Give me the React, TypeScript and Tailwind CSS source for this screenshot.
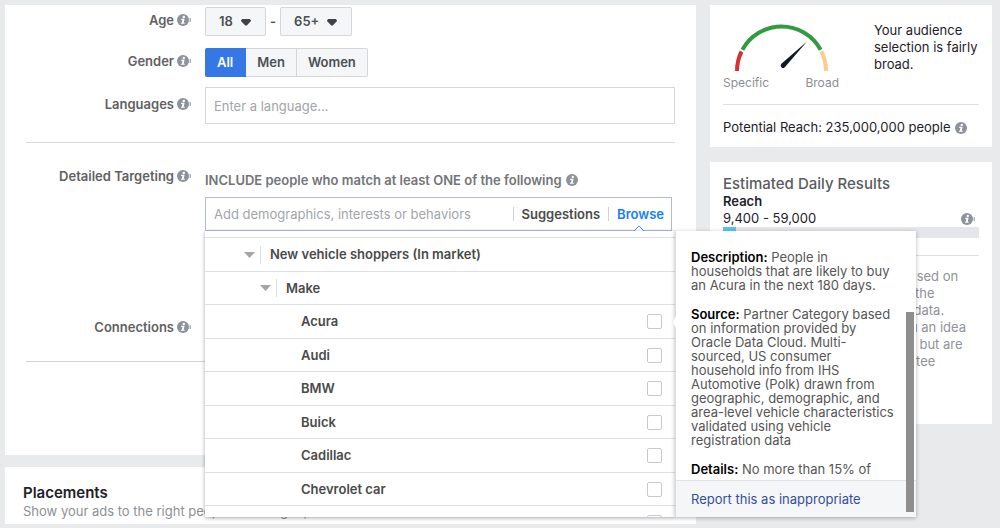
import { useState } from "react";
import clsx from "clsx";

type Node = { label: string; depth: 0 | 1 | 2 };

const nodes: Node[] = [
  { label: "New vehicle shoppers (In market)", depth: 0 },
  { label: "Make", depth: 1 },
  { label: "Acura", depth: 2 },
  { label: "Audi", depth: 2 },
  { label: "BMW", depth: 2 },
  { label: "Buick", depth: 2 },
  { label: "Cadillac", depth: 2 },
  { label: "Chevrolet car", depth: 2 },
  { label: "Chevrolet truck", depth: 2 },
];

const genders = ["All", "Men", "Women"];

function InfoIcon({ tail = false }: { tail?: boolean }) {
  return (
    <svg
      viewBox="0 0 14 12"
      className="h-3 w-3.5 shrink-0"
      role="img"
      aria-label="More info"
    >
      <circle cx="6" cy="6" r="6" fill="#8d929b" />
      <circle cx="6.8" cy="2.9" r="1.2" fill="#fff" />
      <path d="M4.2 4.8h3.4l-.9 3.9h1v1.1H3.9V8.7h.9l.6-2.8H4.2z" fill="#fff" />
      {tail && <path d="M13.2 4v4" stroke="#8d929b" strokeWidth="1" />}
    </svg>
  );
}

function FieldLabel({ text, htmlFor }: { text: string; htmlFor?: string }) {
  return (
    <label
      htmlFor={htmlFor}
      className="flex h-5 w-[165px] shrink-0 items-center justify-end gap-[3px] font-semibold text-[#616161]"
    >
      {text}
      <InfoIcon tail />
    </label>
  );
}

function AgeSelect({
  label,
  id,
  value,
  className,
}: {
  label: string;
  id?: string;
  value: string;
  className: string;
}) {
  return (
    <div className={clsx("relative", className)}>
      <select
        id={id}
        aria-label={label}
        defaultValue={value}
        className="h-[29px] w-full appearance-none rounded-[2px] border border-[#d4d6da] bg-[#f5f6f7] pl-[13px] font-semibold text-[#4b4f56]"
      >
        <option>{value}</option>
      </select>
      <svg
        viewBox="0 0 10 7"
        className="pointer-events-none absolute top-[12px] right-[15px] h-[7px] w-2.5"
      >
        <path d="M1.2 0h7.6L10 1.4V2L5.8 6.4H4.2L0 2v-.6z" fill="#3e4248" />
      </svg>
    </div>
  );
}

function TreeRow({ node }: { node: Node }) {
  const id = node.label.toLowerCase().replace(/[^a-z]+/g, "-");

  return (
    <li
      className={clsx(
        "flex shrink-0 items-center border-t border-[#dfe0e3] pr-[13px] odd:h-[34px] even:h-[33px]",
        node.depth === 0 && "pl-[39px]",
        node.depth === 1 && "pl-[55px]",
        node.depth === 2 && "pl-24",
      )}
    >
      {node.depth < 2 ? (
        <button
          type="button"
          aria-expanded="true"
          className="flex items-center font-semibold text-[#4a4a4a]"
        >
          <svg viewBox="0 0 11 6" className="h-1.5 w-[11px]">
            <path d="M0 0h11L5.5 6z" fill="#a3a5a8" />
          </svg>
          <span className="mr-[9px] ml-[5px] h-[18px] border-l border-[#dfe0e3]" />
          {node.label}
        </button>
      ) : (
        <>
          <label htmlFor={id} className="flex-1 font-semibold text-[#4a4a4a]">
            {node.label}
          </label>
          <input
            id={id}
            type="checkbox"
            className="size-[15px] appearance-none rounded-[2px] border border-[#c6c9d2] bg-white checked:bg-[#3578e5]"
          />
        </>
      )}
    </li>
  );
}

function DetailPopover() {
  return (
    <div className="absolute top-0 left-full flex h-full w-[241px] flex-col border-l border-[#dcdde1] bg-white shadow-[0_1px_4px_rgba(0,0,0,0.3)]">
      <svg
        viewBox="0 0 4 12"
        className="absolute top-[85px] -left-1 h-3 w-1"
      >
        <path d="M4 0v12L0 6z" fill="#fff" />
        <path d="M4 0L0 6l4 6" fill="none" stroke="#e4e5e8" strokeWidth="0.6" />
      </svg>
      <div className="min-h-0 flex-1 space-y-[15px] overflow-hidden pt-[19px] pl-[15px] leading-[14px] text-[#555]">
        <p>
          <b className="font-semibold text-black">Description:</b> People in
          <br />
          households that are likely to buy
          <br />
          an Acura in the next 180 days.
        </p>
        <p>
          <b className="font-semibold text-black">Source:</b> Partner Category based
          <br />
          on information provided by
          <br />
          Oracle Data Cloud. Multi-
          <br />
          sourced, US consumer
          <br />
          household info from IHS
          <br />
          Automotive (Polk) drawn from
          <br />
          geographic, demographic, and
          <br />
          area-level vehicle characteristics
          <br />
          validated using vehicle
          <br />
          registration data
        </p>
        <p>
          <b className="font-semibold text-black">Details:</b> No more than 15% of
        </p>
      </div>
      <div className="flex h-[37px] items-center border-t border-[#e2e3e6] bg-[#f5f6f8] px-[15px]">
        <a href="#report" className="text-[#33509a]">
          Report this as inappropriate
        </a>
      </div>
      {/* Scroll thumb */}
      <div className="absolute right-0.5 bottom-[5px] h-[200px] w-2 bg-[#8e8e8e]" />
    </div>
  );
}

function TargetingSearch() {
  return (
    <div className="relative">
      <div className="mr-[3px] flex h-[34px] items-center border border-[#b4bbd3] bg-white pr-[7px] pl-2">
        <input
          id="targeting"
          type="text"
          placeholder="Add demographics, interests or behaviors"
          className="h-full min-w-0 flex-1 outline-none placeholder:text-[#a3a5a9]"
        />
        <button
          type="button"
          className="border-l border-[#cfd1d5] px-2 leading-[14px] font-semibold text-[#4a4a4a]"
        >
          Suggestions
        </button>
        <button
          type="button"
          className="relative border-l border-[#cfd1d5] pl-2 leading-[14px] font-semibold text-[#147efb]"
        >
          Browse
          <svg
            viewBox="0 0 12 7"
            className="absolute top-[18px] left-6 h-[7px] w-3"
          >
            <path d="M1 7l5-5.5L11 7z" fill="#fff" />
            <path d="M.5 6.5L6 1l5.5 5.5" fill="none" stroke="#4a90e8" />
          </svg>
        </button>
      </div>

      <div className="absolute top-full left-0 z-10 h-[286px] w-full">
        <ul className="flex h-full flex-col overflow-hidden bg-white pt-1.5 shadow-[0_1px_4px_rgba(0,0,0,0.35)]">
          {nodes.map((node) => (
            <TreeRow key={node.label} node={node} />
          ))}
        </ul>
        <DetailPopover />
      </div>
    </div>
  );
}

function AudienceForm() {
  const [gender, setGender] = useState("All");

  return (
    <form className="bg-white px-[21px] pt-0.5 pb-[93px]">
      <div className="flex gap-3.5">
        <div className="pt-[3px]">
          <FieldLabel text="Age" htmlFor="age-min" />
        </div>
        <div className="flex items-center gap-1">
          <AgeSelect id="age-min" label="Minimum age" value="18" className="w-[61px]" />
          <span className="font-semibold text-[#4b4f56]">-</span>
          <AgeSelect label="Maximum age" value="65+" className="w-[72px]" />
        </div>
      </div>

      <div className="mt-3 flex gap-3.5">
        <div className="pt-[3px]">
          <FieldLabel text="Gender" />
        </div>
        <div className="flex h-[29px]" role="group" aria-label="Gender">
          {genders.map((g) => (
            <button
              key={g}
              type="button"
              aria-pressed={g === gender}
              onClick={() => setGender(g)}
              className={clsx(
                "border-y border-r px-[11px] font-semibold first:rounded-l-[2px] first:px-3 last:rounded-r-[2px]",
                g === gender
                  ? "border-[#3578e5] bg-[#3578e5] text-white"
                  : "border-[#d4d6da] bg-[#f5f6f7] text-[#4b4f56]",
              )}
            >
              {g}
            </button>
          ))}
        </div>
      </div>

      <div className="mt-2.5 flex gap-3.5">
        <div className="pt-[7px]">
          <FieldLabel text="Languages" htmlFor="languages" />
        </div>
        <input
          id="languages"
          type="text"
          placeholder="Enter a language..."
          className="h-[37px] min-w-0 flex-1 border border-[#d6d7da] px-2 placeholder:text-[#a3a5a9]"
        />
      </div>

      <hr className="mt-[18px] border-[#d9dadc]" />

      <div className="mt-[23px] flex gap-3.5">
        <FieldLabel text="Detailed Targeting" htmlFor="targeting" />
        <div className="min-w-0 flex-1 pt-1">
          <div className="mb-[7px] flex h-5 items-center gap-1 font-semibold text-[#737577]">
            INCLUDE people who match at least ONE of the following
            <InfoIcon />
          </div>
          <TargetingSearch />
        </div>
      </div>

      <div className="mt-[86px]">
        <FieldLabel text="Connections" />
      </div>

      <hr className="mt-6 border-[#d2d3d6]" />
    </form>
  );
}

function Gauge() {
  return (
    <div className="w-[116px] text-[#8d8f93]">
      <svg viewBox="0 0 116 54" className="h-[54px] w-[116px]" role="img" aria-label="Audience gauge">
        <g fill="none" strokeWidth="4">
          <path d="M14 51A44.5 44.5 0 0 1 18.5 31.5" stroke="#d7312f" />
          <path d="M19.4 29.8A44.5 44.5 0 0 1 97.6 29.8" stroke="#329a41" />
          <path d="M98.5 31.5A44.5 44.5 0 0 1 103 51" stroke="#fbcd8e" />
        </g>
        <path d="M84 21.5L61.8 47.2a2.4 2.4 0 0 1-3.4-3.4z" fill="#111827" />
      </svg>
      <div className="flex h-[18px] items-center justify-between text-xs">
        <span>Specific</span>
        <span>Broad</span>
      </div>
    </div>
  );
}

export default function App() {
  return (
    <div className="flex min-h-screen items-start gap-3.5 bg-[#e9eaec] pt-[5px] pr-2 pb-1 pl-[5px] font-[Inter,'Liberation_Sans',sans-serif] text-[13px] leading-[17px]">
      <main className="flex min-w-0 flex-1 flex-col gap-3">
        <AudienceForm />
        <section className="bg-white px-[18px] pt-[17px] pb-1">
          <h2 className="text-[15px] leading-[18px] font-semibold text-[#1d2129]">
            Placements
          </h2>
          <p className="leading-[18px] text-[#8d8f93]">
            Show your ads to the right people in the right places.
          </p>
        </section>
      </main>

      <aside className="flex w-[282px] shrink-0 flex-col gap-[15px]">
        <section className="bg-white px-[13px] pt-[15px] pb-[11px]">
          <div className="flex justify-between">
            <Gauge />
            <p className="w-[105px] pt-0.5 text-[#1d2129]">
              Your audience selection is fairly broad.
            </p>
          </div>
          <hr className="mt-3 border-[#dfe0e3]" />
          <p className="mt-3.5 flex h-[17px] items-center gap-1 text-[#1d2129]">
            Potential Reach: 235,000,000 people
            <InfoIcon />
          </p>
        </section>

        <section className="bg-white px-[13px] pt-[13px] pb-[37px]">
          <h2 className="text-[15px] leading-[18px] font-medium text-[#5a5c60]">
            Estimated Daily Results
          </h2>
          <h3 className="font-semibold text-[#1d2129]">Reach</h3>
          <div className="flex items-center justify-between pr-1 text-[#1d2129]">
            9,400 - 59,000
            <InfoIcon tail />
          </div>
          <div className="h-[11px] bg-[#e4e6ea]">
            <div className="h-full w-[5%] bg-[#54c7ec]" />
          </div>
          <hr className="mt-[17px] border-[#dfe0e3]" />
          <p className="mt-3 whitespace-nowrap text-[#8f9298]">
            The accuracy of forecasts is based on
            <br />
            factors like old campaign data, the
            <br />
            budget you picked and market data.
            <br />
            Numbers are shown to give you an idea
            <br />
            of performance for this budget, but are
            <br />
            just estimates and don't guarantee
            <br />
            results.
          </p>
        </section>
      </aside>
    </div>
  );
}
